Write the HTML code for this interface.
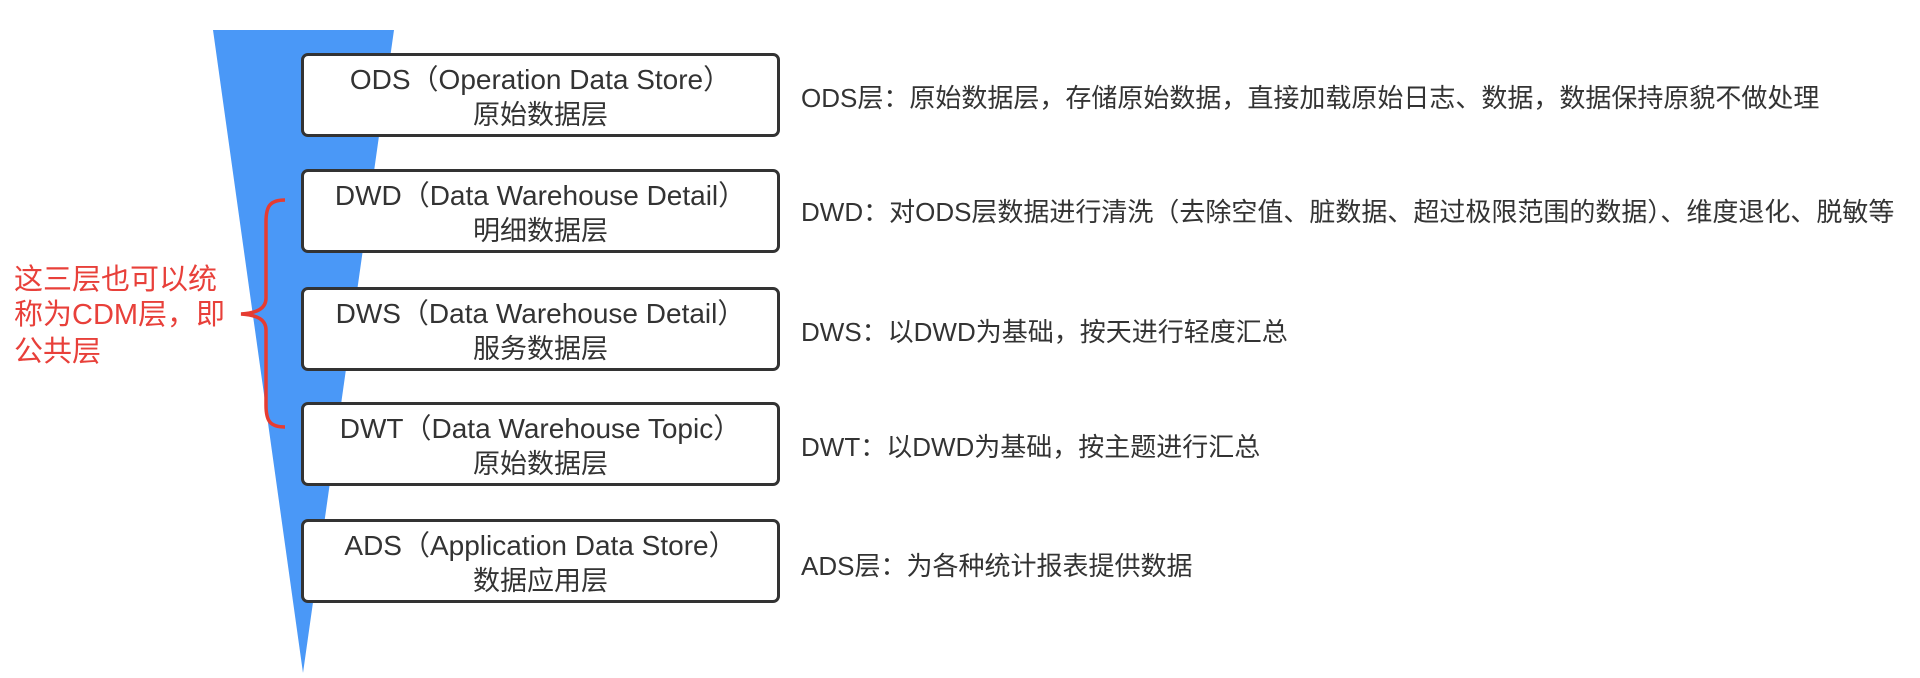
<!DOCTYPE html>
<html><head><meta charset="utf-8"><style>
html,body{margin:0;padding:0;background:#fff;}
body{width:1920px;height:678px;position:relative;overflow:hidden;font-family:"Liberation Sans","Noto Sans CJK SC",sans-serif;color:#333;}
.box{position:absolute;left:301px;width:473px;height:78px;border:3px solid #333;border-radius:7px;background:#fff;}
.box div{position:absolute;left:0;right:0;text-align:center;white-space:nowrap;line-height:32px;}
.l1{top:8px;font-size:28px;}
.l2{top:43px;font-size:27px;}
.d{position:absolute;left:801px;font-size:26px;line-height:32px;white-space:nowrap;color:#333;}
.red{position:absolute;left:14px;font-size:29px;color:#e8403a;line-height:36px;white-space:nowrap;}
</style></head><body>
<svg width="1920" height="678" style="position:absolute;left:0;top:0">
<polygon points="213,30 394,30 303,673" fill="#4a98f7"/>
<path d="M285,200 C270,200 266,206 266,222 L266,298 C266,308 258,313 241,314 C258,315 266,320 266,330 L266,405 C266,421 270,427 285,427" fill="none" stroke="#e63c31" stroke-width="3.5"/>
</svg>
<div class="box" style="top:53px"><div class="l1">ODS（Operation Data Store）</div><div class="l2">原始数据层</div></div>
<div class="box" style="top:169px"><div class="l1">DWD（Data Warehouse Detail）</div><div class="l2">明细数据层</div></div>
<div class="box" style="top:287px"><div class="l1">DWS（Data Warehouse Detail）</div><div class="l2">服务数据层</div></div>
<div class="box" style="top:402px"><div class="l1">DWT（Data Warehouse Topic）</div><div class="l2">原始数据层</div></div>
<div class="box" style="top:519px"><div class="l1">ADS（Application Data Store）</div><div class="l2">数据应用层</div></div>
<div class="d" style="top:82px">ODS层：原始数据层，存储原始数据，直接加载原始日志、数据，数据保持原貌不做处理</div>
<div class="d" style="top:196px">DWD：对ODS层数据进行清洗（去除空值、脏数据、超过极限范围的数据）、维度退化、脱敏等</div>
<div class="d" style="top:316px">DWS：以DWD为基础，按天进行轻度汇总</div>
<div class="d" style="top:431px">DWT：以DWD为基础，按主题进行汇总</div>
<div class="d" style="top:550px">ADS层：为各种统计报表提供数据</div>
<div class="red" style="top:262px">这三层也可以统</div>
<div class="red" style="top:297px">称为CDM层，即</div>
<div class="red" style="top:334px">公共层</div>
</body></html>
